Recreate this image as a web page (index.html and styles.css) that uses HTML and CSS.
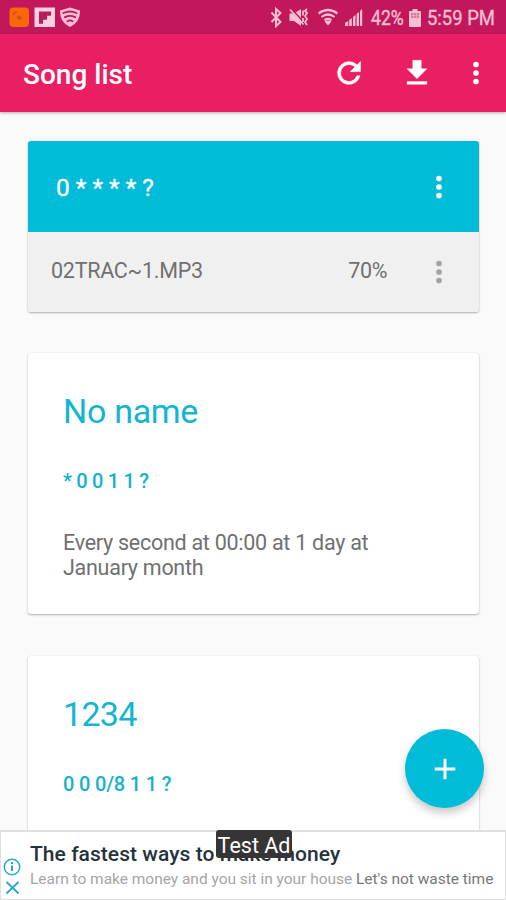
FILE: index.html
```html
<!DOCTYPE html>
<html lang="en">
<head>
<meta charset="utf-8">
<title>Song list</title>
<link rel="stylesheet" href="styles.css">
</head>
<body>
<div class="screen">
  <div class="statusbar">
    <svg class="notifications" width="84" height="34" viewBox="0 0 84 34">
      <rect x="9.500" y="7.500" width="19.500" height="19.500" rx="4" fill="#f96706"/>
      <path d="M13 15q1-3 4-3M17 17q3-2 4 1l-2 1q-1-2-2-2" fill="none" stroke="#d34d18" stroke-width="1.400"/>
      <path fill="#fbd0e2" d="M34.500 7.500h20.500v19.500h-20.500z"/>
      <path fill="#b51c58" d="M39 11.500h12v4.200h-4v4h-4v4h-4z"/>
      <path fill="#f6bdd5" d="M70 7.500l10 3c0 8-3 13-10 16.500-7-3.500-10-8.500-10-16.500z"/>
      <path fill="none" stroke="#b51c58" stroke-width="1.900" stroke-linecap="round" d="M63.500 13q6.500-3 13 0M65 17.200q5-2.600 10 0M67.500 21.200q2.500-1.600 5 0"/>
    </svg>
    <div class="system">
      <svg class="signals" width="94" height="34" viewBox="0 0 94 34" fill="#f4bed4">
        <path d="M1.500 12.500l9 9.500-4.500 4V9l4.500 4-9 9" fill="none" stroke="#f4bed4" stroke-width="2"/>
        <path d="M19.500 13.500h4.500l7-4.500v17l-7-5h-4.500z"/>
        <path d="M22 9.500l13 14" fill="none" stroke="#c2185b" stroke-width="1.600"/>
        <path d="M20 9.500l13.500 15M33 10.500v5M33 18v4M37 9l-2 2 2 2-2 3 2 3-2 3 2 3" fill="none" stroke="#f4bed4" stroke-width="1.800"/>
        <path d="M48.500 13.500q9.500-7 19 0M51.500 17q6.500-5 13 0M54.500 20.200q3.500-2.500 7 0" fill="none" stroke="#f4bed4" stroke-width="2.200"/>
        <path d="M54.500 21.500q3.500-2 7 0l-3.500 4z"/>
        <path d="M75 23l3.200-2v5H75zM79.200 20l2.600-2v8h-2.600zM83 17l2.500-2v11H83zM86.600 14l2.400-2v14h-2.400zM90 11l2.200-2v17H90z"/>
      </svg>
      <span class="percent"><span class="narrow">42%</span></span>
      <svg class="battery" width="12" height="18" viewBox="0 0 12 18" fill="#f4bed4">
        <path d="M3.500 0h5v2H11q1 0 1 1v14q0 1-1 1H1q-1 0-1-1V3q0-1 1-1h2.500z"/>
        <path d="M2 4h8v5H2z" fill="#d67ca5"/>
        <path d="M2 6.500h8M4.500 4v5M7.500 4v5" stroke="#eeb0cb" stroke-width=".7"/>
      </svg>
      <span class="clock"><span class="narrow">5:59 PM</span></span>
    </div>
  </div>

  <header class="appbar">
    <h1>Song list</h1>
    <div class="actions">
      <svg class="icon refresh" viewBox="0 0 24 24"><path stroke="#fff" stroke-width=".5" d="M17.650 6.350A7.960 7.960 0 0 0 12 4a8 8 0 1 0 7.730 10h-2.080A6 6 0 1 1 12 6c1.660 0 3.140.69 4.220 1.780L13 11h7V4z"/></svg>
      <svg class="icon download" viewBox="0 0 24 24"><path stroke="#fff" stroke-width=".3" d="M19 9h-4V3H9v6H5l7 7zM5 18v2h14v-2z"/></svg>
      <svg class="icon more" viewBox="0 0 24 24"><path d="M12 8a2 2 0 1 0 0-4 2 2 0 0 0 0 4zm0 2a2 2 0 1 0 0 4 2 2 0 0 0 0-4zm0 6a2 2 0 1 0 0 4 2 2 0 0 0 0-4z"/></svg>
    </div>
  </header>

  <main class="list">
    <article class="card track">
      <div class="track-head">
        <span class="track-cron">0 * * * * ?</span>
        <svg class="icon more" viewBox="0 0 24 24"><path d="M12 8a2 2 0 1 0 0-4 2 2 0 0 0 0 4zm0 2a2 2 0 1 0 0 4 2 2 0 0 0 0-4zm0 6a2 2 0 1 0 0 4 2 2 0 0 0 0-4z"/></svg>
      </div>
      <div class="track-row">
        <span class="file">02TRAC~1.MP3</span>
        <span class="volume">70%</span>
        <svg class="icon more" viewBox="0 0 24 24"><path d="M12 8a2 2 0 1 0 0-4 2 2 0 0 0 0 4zm0 2a2 2 0 1 0 0 4 2 2 0 0 0 0-4zm0 6a2 2 0 1 0 0 4 2 2 0 0 0 0-4z"/></svg>
      </div>
    </article>
    <article class="card schedule">
      <h2 class="name">No name</h2>
      <div class="cron">* 0 0 1 1 ?</div>
      <p class="about">Every second at 00:00 at 1 day at<br>January month</p>
    </article>
    <article class="card schedule">
      <h2 class="digits">1234</h2>
      <div class="cron steps">0 0 0/8 1 1 ?</div>
    </article>
  </main>

  <div class="fab"><svg width="22" height="22" viewBox="0 0 22 22"><path d="M11 .7v20.600M.7 11h20.600" stroke="#fff" stroke-width="3"/></svg></div>

  <footer class="ad">
    <div class="ad-marks">
      <svg width="18" height="18" viewBox="0 0 18 18" fill="none" stroke="#24a9c9"><circle cx="9" cy="9" r="7.700" stroke-width="1.500"/><path d="M9 7.500V13M9 4v2" stroke-width="2"/></svg>
      <svg width="18" height="14" viewBox="0 0 18 14"><path d="M3.500 1l12 11.500M15.500 1l-12 11.500" stroke="#24a9c9" stroke-width="1.800"/></svg>
    </div>
    <div class="ad-copy">
      <div class="ad-title">The fastest ways to make money</div>
      <div class="ad-text">Learn to make money and you sit in your house <span>Let's not waste time</span></div>
    </div>
    <div class="ad-tag">Test Ad</div>
  </footer>
</div>
</body>
</html>
```
FILE: styles.css
```css
* { box-sizing: border-box; }
body { margin: 0; font-family: Roboto, "Liberation Sans", sans-serif; background: #fafafa; }
h1, h2, p { margin: 0; font-weight: 400; }
svg { display: block; flex: none; }
.screen { position: relative; width: 506px; height: 900px; overflow: hidden; display: flex; flex-direction: column; }

.statusbar { flex: none; height: 34px; background: #c2185b; display: flex; justify-content: space-between; color: #f4bed4; }
.system { display: flex; align-items: center; padding-right: 11px; font-size: 20.500px; line-height: 34px; white-space: nowrap; }
.percent { width: 34px; margin-left: 7px; padding-top: 2px; }
.battery { margin: 2px 6px 0 4px; }
.clock { width: 68px; padding-top: 2px; }
.narrow { display: inline-block; transform: scaleX(.9); transform-origin: left; -webkit-text-stroke: .4px currentColor; }
.percent .narrow { transform: scaleX(.86); }

.appbar { flex: none; height: 78px; background: #e91e63; color: #fff; display: flex; align-items: center; justify-content: space-between; padding: 0 13px 0 23px; box-shadow: 0 1px 3px rgba(0,0,0,.3); z-index: 1; }
.appbar h1 { font-size: 28px; font-weight: 500; line-height: 32px; padding-top: 4px; }
.actions { display: flex; align-items: center; }
.icon { width: 34px; height: 34px; fill: currentColor; }
.download { margin: 0 25px 0 34px; }

.list { flex: 1; min-height: 0; padding: 29px 27px 0 28px; display: flex; flex-direction: column; gap: 41px; }
.card { flex: none; background: #fff; border-radius: 3px; box-shadow: 0 1px 2px rgba(0,0,0,.3), 0 0 1px rgba(0,0,0,.15); }
.track { height: 171px; overflow: hidden; }
.track-head { height: 91px; background: #00bcd8; color: #fff; display: flex; align-items: center; justify-content: space-between; padding: 0 23px 0 28px; }
.track-cron { font-size: 24.500px; padding-top: 1px; -webkit-text-stroke: .3px currentColor; }
.track-row { height: 80px; background: #f0f0f0; color: #707070; display: flex; align-items: center; padding: 0 23px 0 23px; font-size: 21.500px; }
.file { flex: 1; padding-bottom: 3px; letter-spacing: -.26px; }
.volume { padding-bottom: 3px; margin-right: 35px; letter-spacing: -.4px; }
.track-row .icon { color: #a2a2a2; }

.schedule { height: 261px; padding: 37px 34px 0 35px; }
.schedule:last-child { height: 280px; margin-top: 1px; }
.schedule h2 { font-size: 34px; line-height: 42px; color: #13b5d0; letter-spacing: -.3px; }
.schedule h2.digits { letter-spacing: -.7px; }
.cron { margin-top: 36px; font-size: 20px; line-height: 26px; font-weight: 500; color: #13b2ce; letter-spacing: -.3px; }
.cron.steps { letter-spacing: -.17px; }
.about { margin-top: 36px; font-size: 21.500px; line-height: 25px; color: #707070; white-space: nowrap; letter-spacing: -.27px; }

.fab { position: absolute; left: 405px; top: 729px; width: 79px; height: 79px; border-radius: 50%; background: #00bcd8; display: flex; align-items: center; justify-content: center; box-shadow: 0 5px 9px rgba(0,0,0,.22); }

.ad { position: relative; z-index: 2; flex: none; height: 70px; background: #fff; border: 1px solid #e0e0e0; border-top-width: 2px; display: flex; }
.ad-marks { width: 29px; padding: 26px 0 0 2px; display: flex; flex-direction: column; gap: 5px; }
.ad-copy { white-space: nowrap; }
.ad-title { margin-top: 9px; font-size: 21px; line-height: 26px; font-weight: 500; color: #26323a; letter-spacing: .05px; }
.ad-text { font-size: 15.500px; line-height: 24px; color: #a5a5a5; letter-spacing: -.02px; }
.ad-text span { color: #787878; }
.ad-tag { position: absolute; left: 215px; top: -2px; width: 76px; height: 28px; border-radius: 3px; background: #353535; color: #fff; font-size: 21.500px; line-height: 31px; text-align: center; white-space: nowrap; }
```
